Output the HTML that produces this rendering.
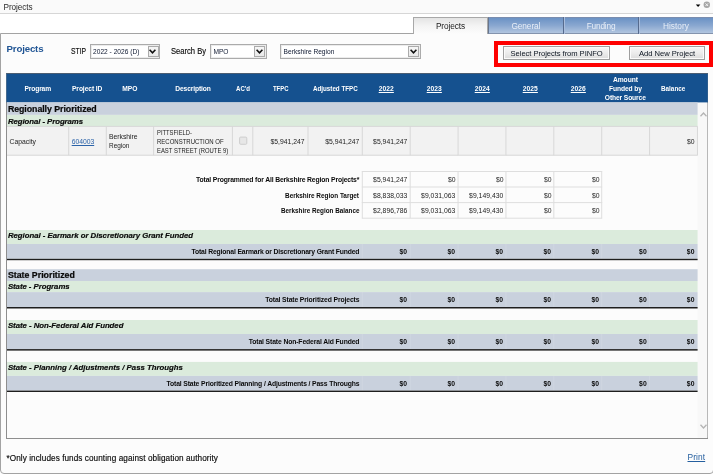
<!DOCTYPE html>
<html><head><meta charset="utf-8">
<style>
*{box-sizing:border-box;margin:0;padding:0}
html,body{width:713px;height:474px;overflow:hidden;background:#fff;font-family:"Liberation Sans",sans-serif}
body{position:relative}
.a{position:absolute}
.t{position:absolute;white-space:pre;font-family:"Liberation Sans",sans-serif}
#tb{left:0;top:0;width:713px;height:14px;background:#fafafa;border-bottom:1px solid #d6d6d6}
#panel{left:0;top:33px;width:713.5px;height:440.5px;border:1px solid #a3a3a3;border-radius:0 0 4px 4px;background:#fcfcfc}
.tab{position:absolute;top:17px;height:17px;background:linear-gradient(#6b92c5,#89a7d0 50%,#b1c5df);border-top:1px solid #7a8daf;border-bottom:1px solid #8393ad;border-left:1px solid #67768f}
.tabsep{position:absolute;top:17px;height:17px;width:2px;border-left:1px solid #566b8e;border-right:1px solid #a9bddc}
#tab1{left:413px;top:17px;width:75px;height:17px;background:linear-gradient(#e4e4e4,#f4f4f4 50%,#fcfcfc);border:1px solid #a8a8a8;border-bottom:none}
.sel{position:absolute;top:44px;height:15px;border:1px solid #ababab;box-shadow:inset 0 0 0 1px #ececec;background:#fff}
.dd{position:absolute;top:46px;width:11px;height:11px;border:1px solid #ababab;background:linear-gradient(#f6f6f6,#e9e9e9)}
.dd svg{position:absolute;left:0.8px;top:1.8px}
#red{left:494.2px;top:41.2px;width:218.8px;height:25.6px;border:4px solid #fe0000}
.btn{position:absolute;top:45.5px;height:14.5px;border:1px solid #9f9f9f;border-radius:0;background:linear-gradient(#f7f7f7,#ececec 50%,#dcdcdc);box-shadow:inset 0 0 0 1px #fbfbfb}
#box{left:6px;top:73px;width:702px;height:365.5px;border:1px solid #8e8e8e;background:#fcfcfc}
#hdr{left:6.5px;top:73px;width:701px;height:29.4px;background:#15518f;border-top:1px solid #59616b}
.g{position:absolute;left:7px;width:690.5px;background:#c9d1dd}
.gr{position:absolute;left:7px;width:690.5px;background:#dbebdc}
.bl{position:absolute;left:7px;width:690.5px;height:1.6px;background:#222}
.c{position:absolute;top:126px;height:29.5px;border:1px solid #d9d9d9;border-left:none;background:#f2f2f2}
.tc{position:absolute;border:1px solid #d9d9d9;border-left:none;border-top:none;height:15.6px}
.tk{position:absolute;width:1px;background:rgba(255,255,255,0.14)}
</style></head><body>
<div id="tb" class="a"></div>
<svg class="a" style="left:695px;top:4px" width="6" height="4" viewBox="0 0 6 4"><path d="M0.8 0.4h4.6L3.1 3.1z" fill="#000"/></svg>
<svg class="a" style="left:703px;top:1px" width="8" height="8" viewBox="0 0 8 8"><circle cx="3.8" cy="3.7" r="3.2" fill="#a6a6a6"/><path d="M2.5 2.4l2.6 2.6M5.1 2.4L2.5 5" stroke="#f4f4f4" stroke-width="1"/></svg>
<div id="panel" class="a"></div>
<div class="tab" style="left:488px;width:225px"></div>
<div class="tabsep" style="left:563px"></div>
<div class="tabsep" style="left:638px"></div>
<div id="tab1" class="a"></div>
<div class="sel" style="left:90px;width:69.5px"></div>
<div class="dd" style="left:147.5px"><svg width="7" height="5" viewBox="0 0 7 5"><path d="M0.6 0.8L3.5 3.8 6.4 0.8" fill="none" stroke="#111" stroke-width="1.6"/></svg></div>
<div class="sel" style="left:210px;width:56.5px"></div>
<div class="dd" style="left:254px"><svg width="7" height="5" viewBox="0 0 7 5"><path d="M0.6 0.8L3.5 3.8 6.4 0.8" fill="none" stroke="#111" stroke-width="1.6"/></svg></div>
<div class="sel" style="left:280px;width:140.5px"></div>
<div class="dd" style="left:408px"><svg width="7" height="5" viewBox="0 0 7 5"><path d="M0.6 0.8L3.5 3.8 6.4 0.8" fill="none" stroke="#111" stroke-width="1.6"/></svg></div>
<div id="red" class="a"></div>
<div class="btn" style="left:503px;width:107px"></div>
<div class="btn" style="left:629px;width:76px"></div>
<div id="box" class="a"></div>
<!-- rows -->
<svg class="a" style="left:0;top:0" width="713" height="474" viewBox="0 0 713 474">
<rect x="697.60" y="102.40" width="9.80" height="335.40" fill="#f8f8f8"/>
<rect x="6.40" y="73.00" width="701.40" height="29.40" fill="#15518f"/>
<rect x="6.40" y="73.00" width="701.40" height="0.80" fill="#59616b"/>
<rect x="7.00" y="102.40" width="690.60" height="12.50" fill="#c9d1dd"/>
<rect x="7.00" y="114.90" width="690.60" height="11.40" fill="#dbebdc"/>
<rect x="7.00" y="126.30" width="690.60" height="29.20" fill="#f2f2f2"/>
<rect x="7.00" y="125.90" width="690.60" height="1.00" fill="#d8d8d8"/>
<rect x="7.00" y="154.70" width="690.60" height="1.00" fill="#d8d8d8"/>
<rect x="68.20" y="126.30" width="1.00" height="29.00" fill="#d8d8d8"/>
<rect x="105.80" y="126.30" width="1.00" height="29.00" fill="#d8d8d8"/>
<rect x="153.10" y="126.30" width="1.00" height="29.00" fill="#d8d8d8"/>
<rect x="231.90" y="126.30" width="1.00" height="29.00" fill="#d8d8d8"/>
<rect x="252.30" y="126.30" width="1.00" height="29.00" fill="#d8d8d8"/>
<rect x="307.50" y="126.30" width="1.00" height="29.00" fill="#d8d8d8"/>
<rect x="361.80" y="126.30" width="1.00" height="29.00" fill="#d8d8d8"/>
<rect x="409.68" y="126.30" width="1.00" height="29.00" fill="#d8d8d8"/>
<rect x="457.56" y="126.30" width="1.00" height="29.00" fill="#d8d8d8"/>
<rect x="505.44" y="126.30" width="1.00" height="29.00" fill="#d8d8d8"/>
<rect x="553.32" y="126.30" width="1.00" height="29.00" fill="#d8d8d8"/>
<rect x="601.20" y="126.30" width="1.00" height="29.00" fill="#d8d8d8"/>
<rect x="649.08" y="126.30" width="1.00" height="29.00" fill="#d8d8d8"/>
<rect x="696.96" y="126.30" width="1.00" height="29.00" fill="#d8d8d8"/>
<rect x="239.6" y="137.1" width="7.2" height="7.2" rx="1" fill="#e7e7e7" stroke="#cbcbcb" stroke-width="0.9"/>
<rect x="361.80" y="171.00" width="240.40" height="1.00" fill="#dedede"/>
<rect x="361.80" y="186.50" width="240.40" height="1.00" fill="#dedede"/>
<rect x="361.80" y="202.10" width="240.40" height="1.00" fill="#dedede"/>
<rect x="361.80" y="217.70" width="240.40" height="1.00" fill="#dedede"/>
<rect x="361.80" y="171.50" width="1.00" height="46.70" fill="#dedede"/>
<rect x="409.68" y="171.50" width="1.00" height="46.70" fill="#dedede"/>
<rect x="457.56" y="171.50" width="1.00" height="46.70" fill="#dedede"/>
<rect x="505.44" y="171.50" width="1.00" height="46.70" fill="#dedede"/>
<rect x="553.32" y="171.50" width="1.00" height="46.70" fill="#dedede"/>
<rect x="601.20" y="171.50" width="1.00" height="46.70" fill="#dedede"/>
<rect x="7.00" y="230.00" width="690.60" height="14.00" fill="#dbebdc"/>
<rect x="7.00" y="244.00" width="690.60" height="14.80" fill="#c9d1dd"/>
<rect x="361.80" y="244.00" width="1.00" height="14.80" fill="#ffffff" opacity="0.13"/>
<rect x="409.68" y="244.00" width="1.00" height="14.80" fill="#ffffff" opacity="0.13"/>
<rect x="457.56" y="244.00" width="1.00" height="14.80" fill="#ffffff" opacity="0.13"/>
<rect x="505.44" y="244.00" width="1.00" height="14.80" fill="#ffffff" opacity="0.13"/>
<rect x="553.32" y="244.00" width="1.00" height="14.80" fill="#ffffff" opacity="0.13"/>
<rect x="601.20" y="244.00" width="1.00" height="14.80" fill="#ffffff" opacity="0.13"/>
<rect x="649.08" y="244.00" width="1.00" height="14.80" fill="#ffffff" opacity="0.13"/>
<rect x="7.00" y="258.80" width="690.60" height="1.40" fill="#1e1e1e"/>
<rect x="7.00" y="269.20" width="690.60" height="11.80" fill="#c9d1dd"/>
<rect x="7.00" y="281.00" width="690.60" height="11.10" fill="#dbebdc"/>
<rect x="7.00" y="292.10" width="690.60" height="14.90" fill="#c9d1dd"/>
<rect x="361.80" y="292.10" width="1.00" height="14.90" fill="#ffffff" opacity="0.13"/>
<rect x="409.68" y="292.10" width="1.00" height="14.90" fill="#ffffff" opacity="0.13"/>
<rect x="457.56" y="292.10" width="1.00" height="14.90" fill="#ffffff" opacity="0.13"/>
<rect x="505.44" y="292.10" width="1.00" height="14.90" fill="#ffffff" opacity="0.13"/>
<rect x="553.32" y="292.10" width="1.00" height="14.90" fill="#ffffff" opacity="0.13"/>
<rect x="601.20" y="292.10" width="1.00" height="14.90" fill="#ffffff" opacity="0.13"/>
<rect x="649.08" y="292.10" width="1.00" height="14.90" fill="#ffffff" opacity="0.13"/>
<rect x="7.00" y="307.00" width="690.60" height="1.50" fill="#1e1e1e"/>
<rect x="7.00" y="320.00" width="690.60" height="14.00" fill="#dbebdc"/>
<rect x="7.00" y="334.00" width="690.60" height="15.10" fill="#c9d1dd"/>
<rect x="361.80" y="334.00" width="1.00" height="15.10" fill="#ffffff" opacity="0.13"/>
<rect x="409.68" y="334.00" width="1.00" height="15.10" fill="#ffffff" opacity="0.13"/>
<rect x="457.56" y="334.00" width="1.00" height="15.10" fill="#ffffff" opacity="0.13"/>
<rect x="505.44" y="334.00" width="1.00" height="15.10" fill="#ffffff" opacity="0.13"/>
<rect x="553.32" y="334.00" width="1.00" height="15.10" fill="#ffffff" opacity="0.13"/>
<rect x="601.20" y="334.00" width="1.00" height="15.10" fill="#ffffff" opacity="0.13"/>
<rect x="649.08" y="334.00" width="1.00" height="15.10" fill="#ffffff" opacity="0.13"/>
<rect x="7.00" y="349.10" width="690.60" height="1.50" fill="#1e1e1e"/>
<rect x="7.00" y="361.90" width="690.60" height="14.00" fill="#dbebdc"/>
<rect x="7.00" y="375.90" width="690.60" height="14.70" fill="#c9d1dd"/>
<rect x="361.80" y="375.90" width="1.00" height="14.70" fill="#ffffff" opacity="0.13"/>
<rect x="409.68" y="375.90" width="1.00" height="14.70" fill="#ffffff" opacity="0.13"/>
<rect x="457.56" y="375.90" width="1.00" height="14.70" fill="#ffffff" opacity="0.13"/>
<rect x="505.44" y="375.90" width="1.00" height="14.70" fill="#ffffff" opacity="0.13"/>
<rect x="553.32" y="375.90" width="1.00" height="14.70" fill="#ffffff" opacity="0.13"/>
<rect x="601.20" y="375.90" width="1.00" height="14.70" fill="#ffffff" opacity="0.13"/>
<rect x="649.08" y="375.90" width="1.00" height="14.70" fill="#ffffff" opacity="0.13"/>
<rect x="7.00" y="390.60" width="690.60" height="1.40" fill="#1e1e1e"/>
</svg>
<!-- scrollbar -->
<svg class="a" style="left:699.5px;top:111.5px" width="7" height="5" viewBox="0 0 7 5"><path d="M0.5 4.2L3.5 1 6.5 4.2" fill="none" stroke="#b4b4b4" stroke-width="1.3"/></svg>
<svg class="a" style="left:699.5px;top:423.5px" width="7" height="5" viewBox="0 0 7 5"><path d="M0.5 0.8L3.5 4 6.5 0.8" fill="none" stroke="#b4b4b4" stroke-width="1.3"/></svg>
<div class="a" style="left:0;top:0;width:713px;height:474px;will-change:transform">
<span class="t" style="left:3.50px;top:3.00px;font-size:8.2px;line-height:9.84px;color:#2a2a2a;letter-spacing:-0.085px;">Projects</span>
<span class="t" style="left:435.90px;top:22.00px;font-size:8.3px;line-height:9.96px;color:#222;letter-spacing:-0.098px;">Projects</span>
<span class="t" style="left:511.50px;top:22.00px;font-size:8.3px;line-height:9.96px;color:#e8eef7;letter-spacing:-0.104px;">General</span>
<span class="t" style="left:586.70px;top:22.00px;font-size:8.3px;line-height:9.96px;color:#e8eef7;letter-spacing:-0.183px;">Funding</span>
<span class="t" style="left:663.00px;top:22.00px;font-size:8.3px;line-height:9.96px;color:#e8eef7;letter-spacing:-0.004px;">History</span>
<span class="t" style="left:6.50px;top:43.00px;font-size:9.7px;line-height:11.64px;color:#1f5494;letter-spacing:-0.167px;font-weight:bold;">Projects</span>
<span class="t" style="left:70.80px;top:46.00px;font-size:8.8px;line-height:10.56px;color:#0c0c0c;transform:scaleX(0.7719);transform-origin:0 0;-webkit-text-stroke:0.15px #0c0c0c">STIP</span>
<span class="t" style="left:93.00px;top:48.00px;font-size:6.6px;line-height:7.92px;color:#0e1830;letter-spacing:0.021px;">2022 - 2026 (D)</span>
<span class="t" style="left:171.40px;top:46.00px;font-size:8.8px;line-height:10.56px;color:#0c0c0c;transform:scaleX(0.8647);transform-origin:0 0;-webkit-text-stroke:0.15px #0c0c0c">Search By</span>
<span class="t" style="left:213.60px;top:48.00px;font-size:6.6px;line-height:7.92px;color:#0e1830;letter-spacing:-0.077px;">MPO</span>
<span class="t" style="left:283.60px;top:48.00px;font-size:6.6px;line-height:7.92px;color:#0e1830;letter-spacing:0.014px;">Berkshire Region</span>
<span class="t" style="left:510.60px;top:49.00px;font-size:7.6px;line-height:9.12px;color:#0b1420;letter-spacing:-0.049px;">Select Projects from PINFO</span>
<span class="t" style="left:639.10px;top:49.00px;font-size:7.6px;line-height:9.12px;color:#0b1420;letter-spacing:-0.037px;">Add New Project</span>
<span class="t" style="left:24.50px;top:85.00px;font-size:6.7px;line-height:8.04px;color:#ffffff;letter-spacing:-0.145px;font-weight:bold;">Program</span>
<span class="t" style="left:72.00px;top:85.00px;font-size:6.7px;line-height:8.04px;color:#ffffff;letter-spacing:-0.092px;font-weight:bold;">Project ID</span>
<span class="t" style="left:122.20px;top:85.00px;font-size:6.7px;line-height:8.04px;color:#ffffff;letter-spacing:0.055px;font-weight:bold;">MPO</span>
<span class="t" style="left:175.30px;top:85.00px;font-size:6.7px;line-height:8.04px;color:#ffffff;letter-spacing:-0.118px;font-weight:bold;">Description</span>
<span class="t" style="left:235.50px;top:85.00px;font-size:6.7px;line-height:8.04px;color:#ffffff;transform:scaleX(0.9059);transform-origin:0 0;font-weight:bold;">AC'd</span>
<span class="t" style="left:272.50px;top:85.00px;font-size:6.7px;line-height:8.04px;color:#ffffff;transform:scaleX(0.8873);transform-origin:0 0;font-weight:bold;">TFPC</span>
<span class="t" style="left:312.70px;top:85.00px;font-size:6.7px;line-height:8.04px;color:#ffffff;transform:scaleX(0.9325);transform-origin:0 0;font-weight:bold;">Adjusted TFPC</span>
<span class="t" style="left:378.70px;top:85.00px;font-size:6.7px;line-height:8.04px;color:#ffffff;letter-spacing:0.077px;font-weight:bold;text-decoration:underline;text-underline-offset:1px">2022</span>
<span class="t" style="left:426.70px;top:85.00px;font-size:6.7px;line-height:8.04px;color:#ffffff;letter-spacing:0.077px;font-weight:bold;text-decoration:underline;text-underline-offset:1px">2023</span>
<span class="t" style="left:474.70px;top:85.00px;font-size:6.7px;line-height:8.04px;color:#ffffff;letter-spacing:0.077px;font-weight:bold;text-decoration:underline;text-underline-offset:1px">2024</span>
<span class="t" style="left:522.70px;top:85.00px;font-size:6.7px;line-height:8.04px;color:#ffffff;letter-spacing:0.077px;font-weight:bold;text-decoration:underline;text-underline-offset:1px">2025</span>
<span class="t" style="left:570.70px;top:85.00px;font-size:6.7px;line-height:8.04px;color:#ffffff;letter-spacing:0.077px;font-weight:bold;text-decoration:underline;text-underline-offset:1px">2026</span>
<span class="t" style="left:612.90px;top:76.00px;font-size:6.7px;line-height:8.04px;color:#ffffff;letter-spacing:-0.028px;font-weight:bold;">Amount</span>
<span class="t" style="left:609.00px;top:85.00px;font-size:6.7px;line-height:8.04px;color:#ffffff;letter-spacing:-0.090px;font-weight:bold;">Funded by</span>
<span class="t" style="left:604.80px;top:94.00px;font-size:6.7px;line-height:8.04px;color:#ffffff;letter-spacing:-0.115px;font-weight:bold;">Other Source</span>
<span class="t" style="left:661.00px;top:85.00px;font-size:6.7px;line-height:8.04px;color:#ffffff;transform:scaleX(0.9471);transform-origin:0 0;font-weight:bold;">Balance</span>
<span class="t" style="left:7.90px;top:104.00px;font-size:8.8px;line-height:10.56px;color:#0a0a0a;letter-spacing:-0.052px;font-weight:bold;-webkit-text-stroke:0.22px #0a0a0a">Regionally Prioritized</span>
<span class="t" style="left:7.90px;top:117.00px;font-size:7.8px;line-height:9.36px;color:#0a0a0a;letter-spacing:-0.061px;font-weight:bold;font-style:italic;-webkit-text-stroke:0.18px #0a0a0a">Regional - Programs</span>
<span class="t" style="left:7.90px;top:231.00px;font-size:7.8px;line-height:9.36px;color:#0a0a0a;letter-spacing:-0.025px;font-weight:bold;font-style:italic;-webkit-text-stroke:0.18px #0a0a0a">Regional - Earmark or Discretionary Grant Funded</span>
<span class="t" style="left:7.90px;top:270.00px;font-size:8.8px;line-height:10.56px;color:#0a0a0a;letter-spacing:0.001px;font-weight:bold;-webkit-text-stroke:0.22px #0a0a0a">State Prioritized</span>
<span class="t" style="left:7.90px;top:282.00px;font-size:7.8px;line-height:9.36px;color:#0a0a0a;letter-spacing:-0.044px;font-weight:bold;font-style:italic;-webkit-text-stroke:0.18px #0a0a0a">State - Programs</span>
<span class="t" style="left:7.90px;top:321.00px;font-size:7.8px;line-height:9.36px;color:#0a0a0a;letter-spacing:-0.024px;font-weight:bold;font-style:italic;-webkit-text-stroke:0.18px #0a0a0a">State - Non-Federal Aid Funded</span>
<span class="t" style="left:7.90px;top:363.00px;font-size:7.8px;line-height:9.36px;color:#0a0a0a;letter-spacing:-0.004px;font-weight:bold;font-style:italic;-webkit-text-stroke:0.18px #0a0a0a">State - Planning / Adjustments / Pass Throughs</span>
<span class="t" style="left:9.60px;top:138.00px;font-size:6.8px;line-height:8.16px;color:#1c1c1c;letter-spacing:-0.019px;">Capacity</span>
<span class="t" style="left:71.70px;top:138.00px;font-size:6.8px;line-height:8.16px;color:#2a62a8;letter-spacing:-0.031px;text-decoration:underline;text-underline-offset:1px">604003</span>
<span class="t" style="left:109.10px;top:133.00px;font-size:6.8px;line-height:8.16px;color:#1c1c1c;letter-spacing:-0.047px;">Berkshire</span>
<span class="t" style="left:109.10px;top:142.00px;font-size:6.8px;line-height:8.16px;color:#1c1c1c;transform:scaleX(0.9468);transform-origin:0 0;">Region</span>
<span class="t" style="left:156.80px;top:129.00px;font-size:6.8px;line-height:8.16px;color:#1c1c1c;transform:scaleX(0.8555);transform-origin:0 0;">PITTSFIELD-</span>
<span class="t" style="left:156.80px;top:138.00px;font-size:6.8px;line-height:8.16px;color:#1c1c1c;transform:scaleX(0.8831);transform-origin:0 0;">RECONSTRUCTION OF</span>
<span class="t" style="left:156.80px;top:147.00px;font-size:6.8px;line-height:8.16px;color:#1c1c1c;transform:scaleX(0.8685);transform-origin:0 0;">EAST STREET (ROUTE 9)</span>
<span class="t" style="left:270.50px;top:138.00px;font-size:6.8px;line-height:8.16px;color:#1c1c1c;letter-spacing:-0.003px;">$5,941,247</span>
<span class="t" style="left:325.30px;top:138.00px;font-size:6.8px;line-height:8.16px;color:#1c1c1c;letter-spacing:-0.003px;">$5,941,247</span>
<span class="t" style="left:373.10px;top:138.00px;font-size:6.8px;line-height:8.16px;color:#1c1c1c;letter-spacing:0.027px;">$5,941,247</span>
<span class="t" style="left:687.00px;top:138.00px;font-size:6.8px;line-height:8.16px;color:#1c1c1c;letter-spacing:-0.081px;">$0</span>
<span class="t" style="left:373.10px;top:176.00px;font-size:6.8px;line-height:8.16px;color:#1c1c1c;letter-spacing:0.027px;">$5,941,247</span>
<span class="t" style="left:448.00px;top:176.00px;font-size:6.8px;line-height:8.16px;color:#1c1c1c;letter-spacing:-0.081px;">$0</span>
<span class="t" style="left:496.00px;top:176.00px;font-size:6.8px;line-height:8.16px;color:#1c1c1c;letter-spacing:-0.081px;">$0</span>
<span class="t" style="left:544.00px;top:176.00px;font-size:6.8px;line-height:8.16px;color:#1c1c1c;letter-spacing:-0.081px;">$0</span>
<span class="t" style="left:592.00px;top:176.00px;font-size:6.8px;line-height:8.16px;color:#1c1c1c;letter-spacing:-0.081px;">$0</span>
<span class="t" style="left:373.10px;top:192.00px;font-size:6.8px;line-height:8.16px;color:#1c1c1c;letter-spacing:0.027px;">$8,838,033</span>
<span class="t" style="left:421.10px;top:192.00px;font-size:6.8px;line-height:8.16px;color:#1c1c1c;letter-spacing:0.027px;">$9,031,063</span>
<span class="t" style="left:469.10px;top:192.00px;font-size:6.8px;line-height:8.16px;color:#1c1c1c;letter-spacing:0.027px;">$9,149,430</span>
<span class="t" style="left:544.00px;top:192.00px;font-size:6.8px;line-height:8.16px;color:#1c1c1c;letter-spacing:-0.081px;">$0</span>
<span class="t" style="left:592.00px;top:192.00px;font-size:6.8px;line-height:8.16px;color:#1c1c1c;letter-spacing:-0.081px;">$0</span>
<span class="t" style="left:373.10px;top:207.00px;font-size:6.8px;line-height:8.16px;color:#1c1c1c;letter-spacing:0.027px;">$2,896,786</span>
<span class="t" style="left:421.10px;top:207.00px;font-size:6.8px;line-height:8.16px;color:#1c1c1c;letter-spacing:0.027px;">$9,031,063</span>
<span class="t" style="left:469.10px;top:207.00px;font-size:6.8px;line-height:8.16px;color:#1c1c1c;letter-spacing:0.027px;">$9,149,430</span>
<span class="t" style="left:544.00px;top:207.00px;font-size:6.8px;line-height:8.16px;color:#1c1c1c;letter-spacing:-0.081px;">$0</span>
<span class="t" style="left:592.00px;top:207.00px;font-size:6.8px;line-height:8.16px;color:#1c1c1c;letter-spacing:-0.081px;">$0</span>
<span class="t" style="left:196.00px;top:176.00px;font-size:6.8px;line-height:8.16px;color:#0a0a0a;letter-spacing:-0.140px;font-weight:bold;">Total Programmed for All Berkshire Region Projects*</span>
<span class="t" style="left:285.20px;top:192.00px;font-size:6.8px;line-height:8.16px;color:#0a0a0a;transform:scaleX(0.9434);transform-origin:0 0;font-weight:bold;">Berkshire Region Target</span>
<span class="t" style="left:280.70px;top:207.00px;font-size:6.8px;line-height:8.16px;color:#0a0a0a;transform:scaleX(0.9318);transform-origin:0 0;font-weight:bold;">Berkshire Region Balance</span>
<span class="t" style="left:191.50px;top:248.00px;font-size:6.8px;line-height:8.16px;color:#0a0a0a;letter-spacing:-0.154px;font-weight:bold;">Total Regional Earmark or Discretionary Grant Funded</span>
<span class="t" style="left:399.50px;top:248.00px;font-size:6.8px;line-height:8.16px;color:#0a0a0a;letter-spacing:0.069px;font-weight:bold;">$0</span>
<span class="t" style="left:447.50px;top:248.00px;font-size:6.8px;line-height:8.16px;color:#0a0a0a;letter-spacing:0.069px;font-weight:bold;">$0</span>
<span class="t" style="left:495.50px;top:248.00px;font-size:6.8px;line-height:8.16px;color:#0a0a0a;letter-spacing:0.069px;font-weight:bold;">$0</span>
<span class="t" style="left:543.50px;top:248.00px;font-size:6.8px;line-height:8.16px;color:#0a0a0a;letter-spacing:0.069px;font-weight:bold;">$0</span>
<span class="t" style="left:591.50px;top:248.00px;font-size:6.8px;line-height:8.16px;color:#0a0a0a;letter-spacing:0.069px;font-weight:bold;">$0</span>
<span class="t" style="left:639.10px;top:248.00px;font-size:6.8px;line-height:8.16px;color:#0a0a0a;letter-spacing:0.069px;font-weight:bold;">$0</span>
<span class="t" style="left:686.80px;top:248.00px;font-size:6.8px;line-height:8.16px;color:#0a0a0a;letter-spacing:0.069px;font-weight:bold;">$0</span>
<span class="t" style="left:265.20px;top:296.00px;font-size:6.8px;line-height:8.16px;color:#0a0a0a;letter-spacing:-0.121px;font-weight:bold;">Total State Prioritized Projects</span>
<span class="t" style="left:399.50px;top:296.00px;font-size:6.8px;line-height:8.16px;color:#0a0a0a;letter-spacing:0.069px;font-weight:bold;">$0</span>
<span class="t" style="left:447.50px;top:296.00px;font-size:6.8px;line-height:8.16px;color:#0a0a0a;letter-spacing:0.069px;font-weight:bold;">$0</span>
<span class="t" style="left:495.50px;top:296.00px;font-size:6.8px;line-height:8.16px;color:#0a0a0a;letter-spacing:0.069px;font-weight:bold;">$0</span>
<span class="t" style="left:543.50px;top:296.00px;font-size:6.8px;line-height:8.16px;color:#0a0a0a;letter-spacing:0.069px;font-weight:bold;">$0</span>
<span class="t" style="left:591.50px;top:296.00px;font-size:6.8px;line-height:8.16px;color:#0a0a0a;letter-spacing:0.069px;font-weight:bold;">$0</span>
<span class="t" style="left:639.10px;top:296.00px;font-size:6.8px;line-height:8.16px;color:#0a0a0a;letter-spacing:0.069px;font-weight:bold;">$0</span>
<span class="t" style="left:686.80px;top:296.00px;font-size:6.8px;line-height:8.16px;color:#0a0a0a;letter-spacing:0.069px;font-weight:bold;">$0</span>
<span class="t" style="left:248.70px;top:338.00px;font-size:6.8px;line-height:8.16px;color:#0a0a0a;letter-spacing:-0.120px;font-weight:bold;">Total State Non-Federal Aid Funded</span>
<span class="t" style="left:399.50px;top:338.00px;font-size:6.8px;line-height:8.16px;color:#0a0a0a;letter-spacing:0.069px;font-weight:bold;">$0</span>
<span class="t" style="left:447.50px;top:338.00px;font-size:6.8px;line-height:8.16px;color:#0a0a0a;letter-spacing:0.069px;font-weight:bold;">$0</span>
<span class="t" style="left:495.50px;top:338.00px;font-size:6.8px;line-height:8.16px;color:#0a0a0a;letter-spacing:0.069px;font-weight:bold;">$0</span>
<span class="t" style="left:543.50px;top:338.00px;font-size:6.8px;line-height:8.16px;color:#0a0a0a;letter-spacing:0.069px;font-weight:bold;">$0</span>
<span class="t" style="left:591.50px;top:338.00px;font-size:6.8px;line-height:8.16px;color:#0a0a0a;letter-spacing:0.069px;font-weight:bold;">$0</span>
<span class="t" style="left:639.10px;top:338.00px;font-size:6.8px;line-height:8.16px;color:#0a0a0a;letter-spacing:0.069px;font-weight:bold;">$0</span>
<span class="t" style="left:686.80px;top:338.00px;font-size:6.8px;line-height:8.16px;color:#0a0a0a;letter-spacing:0.069px;font-weight:bold;">$0</span>
<span class="t" style="left:166.50px;top:380.00px;font-size:6.8px;line-height:8.16px;color:#0a0a0a;letter-spacing:-0.135px;font-weight:bold;">Total State Prioritized Planning / Adjustments / Pass Throughs</span>
<span class="t" style="left:399.50px;top:380.00px;font-size:6.8px;line-height:8.16px;color:#0a0a0a;letter-spacing:0.069px;font-weight:bold;">$0</span>
<span class="t" style="left:447.50px;top:380.00px;font-size:6.8px;line-height:8.16px;color:#0a0a0a;letter-spacing:0.069px;font-weight:bold;">$0</span>
<span class="t" style="left:495.50px;top:380.00px;font-size:6.8px;line-height:8.16px;color:#0a0a0a;letter-spacing:0.069px;font-weight:bold;">$0</span>
<span class="t" style="left:543.50px;top:380.00px;font-size:6.8px;line-height:8.16px;color:#0a0a0a;letter-spacing:0.069px;font-weight:bold;">$0</span>
<span class="t" style="left:591.50px;top:380.00px;font-size:6.8px;line-height:8.16px;color:#0a0a0a;letter-spacing:0.069px;font-weight:bold;">$0</span>
<span class="t" style="left:639.10px;top:380.00px;font-size:6.8px;line-height:8.16px;color:#0a0a0a;letter-spacing:0.069px;font-weight:bold;">$0</span>
<span class="t" style="left:686.80px;top:380.00px;font-size:6.8px;line-height:8.16px;color:#0a0a0a;letter-spacing:0.069px;font-weight:bold;">$0</span>
<span class="t" style="left:6.50px;top:454.00px;font-size:8.2px;line-height:9.84px;color:#0a0a0a;letter-spacing:0.068px;-webkit-text-stroke:0.15px #0a0a0a">*Only includes funds counting against obligation authority</span>
<span class="t" style="left:687.50px;top:452.00px;font-size:8.4px;line-height:10.08px;color:#255f9f;letter-spacing:0.093px;text-decoration:underline;text-underline-offset:1px">Print</span>
</div>
</body></html>
